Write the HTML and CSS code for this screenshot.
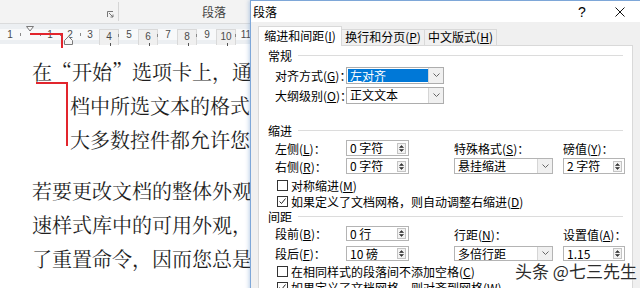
FILE: index.html
```html
<!DOCTYPE html>
<html lang="zh-CN">
<head>
  <meta charset="UTF-8" />
  <title>段落</title>
  <link rel="stylesheet" href="styles.css">
</head>
<body>
  <div class="screen">
    <!-- Word document behind the dialog -->
    <div class="word">
      <div class="ribbon">
        <div class="rgroup first">
          <svg class="launcher" width="7" height="7" viewBox="0 0 7 7">
            <path d="M0.5 6V0.5H6" fill="none" stroke="#777" />
            <path d="M2 2L6 6M3.5 6H6V3.5" fill="none" stroke="#777" />
          </svg>
        </div>
        <div class="rgroup second"><span class="rlabel">段落</span></div>
      </div>

      <div class="ruler-bar">
        <div class="ruler">
          <span class="rc">1</span>
          <span class="rc"></span>
          <span class="rc">1</span>
          <span class="rc">2</span>
          <span class="rc">3</span>
          <span class="rc tab">4</span>
          <span class="rc">5</span>
          <span class="rc tab">6</span>
          <span class="rc">7</span>
          <span class="rc tab">8</span>
          <span class="rc">9</span>
          <span class="rc tab">10</span>
          <span class="rc">11</span>
        </div>
      </div>

      <div class="page">
        <div class="para">
          <div class="ln">在“开始”选项卡上，通过从快速样式库中为所选文本选择一种外观，您可以方便地更改文</div>
          <div class="ln hang">档中所选文本的格式。您还可以使用“开始”选项卡上的其他控件来直接设置文本格式。</div>
          <div class="ln hang">大多数控件都允许您选择是使用当前主题外观，还是使用某种直接指定的格式。</div>
        </div>
        <div class="para">
          <div class="ln">若要更改文档的整体外观，请在“页面布局”选项卡上选择新的主题元素。若要更改快</div>
          <div class="ln">速样式库中的可用外观，请使用更改当前快速样式集命令。主题库和快速样式库都提供</div>
          <div class="ln">了重置命令，因而您总是可以将文档外观还原为原始模板中包含的外观。</div>
        </div>
      </div>

      <!-- indent markers and red annotation -->
      <svg class="marks" width="250" height="160" viewBox="0 0 250 160">
        <polygon points="26.5,26.5 33.5,26.5 30,31" fill="#f6f6f6" stroke="#7a7a7a" />
        <polygon points="64.5,40.5 68.5,36.5 72.5,40.5 72.5,44.5 64.5,44.5" fill="#f6f6f6" stroke="#7a7a7a" />
        <polyline points="30,34 62,34 62,48" fill="none" stroke="#e2252d" stroke-width="2" />
        <polyline points="36,83 67,83 67,146" fill="none" stroke="#e2252d" stroke-width="2" />
      </svg>
    </div>

    <!-- Paragraph dialog -->
    <div class="dialog">
      <div class="titlebar">
        <span class="title">段落</span>
        <span class="help">?</span>
        <span class="close">
          <svg width="10" height="10" viewBox="0 0 10 10"><path d="M0.5 0.5L9.5 9.5M9.5 0.5L0.5 9.5" stroke="#111" /></svg>
        </span>
      </div>

      <div class="tabs">
        <div class="tab on">缩进和间距(<u>I</u>)</div>
        <div class="tab t2">换行和分页(<u>P</u>)</div>
        <div class="tab t3">中文版式(<u>H</u>)</div>
      </div>

      <div class="panel">
        <div class="grp">常规</div>
        <div class="row top">
          <span class="lbl">对齐方式(<u>G</u>)：</span>
          <div class="combo wide">
            <span class="val hl">左对齐</span>
            <span class="btn"><svg width="7" height="4" viewBox="0 0 7 4"><path d="M0.5 0.5L3.5 3.5L6.5 0.5" fill="none" stroke="#666" /></svg></span>
          </div>
        </div>
        <div class="row">
          <span class="lbl">大纲级别(<u>O</u>)：</span>
          <div class="combo wide">
            <span class="val">正文文本</span>
            <span class="btn"><svg width="7" height="4" viewBox="0 0 7 4"><path d="M0.5 0.5L3.5 3.5L6.5 0.5" fill="none" stroke="#666" /></svg></span>
          </div>
        </div>

        <div class="grp gap">缩进</div>
        <div class="grid ind">
          <span class="lbl">左侧(<u>L</u>)：</span>
          <div class="spin"><span class="val">0 字符</span><span class="arr"><svg width="9" height="11" viewBox="0 0 9 11"><rect x="0.5" y="0.5" width="8" height="10" fill="#f2f2f2" stroke="#c4c4c4" /><path d="M2.5 4.5L4.5 2.5L6.5 4.5Z M2.5 6.5L4.5 8.5L6.5 6.5Z" fill="#333" stroke="#333" stroke-width="0.6" /></svg></span></div>
          <span class="lbl c3">特殊格式(<u>S</u>)：</span>
          <span class="lbl c4">磅值(<u>Y</u>)：</span>

          <span class="lbl">右侧(<u>R</u>)：</span>
          <div class="spin"><span class="val">0 字符</span><span class="arr"><svg width="9" height="11" viewBox="0 0 9 11"><rect x="0.5" y="0.5" width="8" height="10" fill="#f2f2f2" stroke="#c4c4c4" /><path d="M2.5 4.5L4.5 2.5L6.5 4.5Z M2.5 6.5L4.5 8.5L6.5 6.5Z" fill="#333" stroke="#333" stroke-width="0.6" /></svg></span></div>
          <div class="combo mid c3">
            <span class="val">悬挂缩进</span>
            <span class="btn"><svg width="7" height="4" viewBox="0 0 7 4"><path d="M0.5 0.5L3.5 3.5L6.5 0.5" fill="none" stroke="#666" /></svg></span>
          </div>
          <div class="spin narrow c4"><span class="val">2 字符</span><span class="arr"><svg width="9" height="11" viewBox="0 0 9 11"><rect x="0.5" y="0.5" width="8" height="10" fill="#f2f2f2" stroke="#c4c4c4" /><path d="M2.5 4.5L4.5 2.5L6.5 4.5Z M2.5 6.5L4.5 8.5L6.5 6.5Z" fill="#333" stroke="#333" stroke-width="0.6" /></svg></span></div>
        </div>

        <div class="chk first"><span class="box"></span>对称缩进(<u>M</u>)</div>
        <div class="chk"><span class="box"><svg width="9" height="9" viewBox="0 0 9 9"><path d="M1.5 4.5L3.5 6.5L7.5 1.5" fill="none" stroke="#222" stroke-width="1" /></svg></span>如果定义了文档网格，则自动调整右缩进(<u>D</u>)</div>

        <div class="grp short">间距</div>
        <div class="grid sp">
          <span class="lbl">段前(<u>B</u>)：</span>
          <div class="spin"><span class="val">0 行</span><span class="arr"><svg width="9" height="11" viewBox="0 0 9 11"><rect x="0.5" y="0.5" width="8" height="10" fill="#f2f2f2" stroke="#c4c4c4" /><path d="M2.5 4.5L4.5 2.5L6.5 4.5Z M2.5 6.5L4.5 8.5L6.5 6.5Z" fill="#333" stroke="#333" stroke-width="0.6" /></svg></span></div>
          <span class="lbl c3 low">行距(<u>N</u>)：</span>
          <span class="lbl c4 low">设置值(<u>A</u>)：</span>

          <span class="lbl">段后(<u>F</u>)：</span>
          <div class="spin"><span class="val">10 磅</span><span class="arr"><svg width="9" height="11" viewBox="0 0 9 11"><rect x="0.5" y="0.5" width="8" height="10" fill="#f2f2f2" stroke="#c4c4c4" /><path d="M2.5 4.5L4.5 2.5L6.5 4.5Z M2.5 6.5L4.5 8.5L6.5 6.5Z" fill="#333" stroke="#333" stroke-width="0.6" /></svg></span></div>
          <div class="combo mid c3">
            <span class="val">多倍行距</span>
            <span class="btn"><svg width="7" height="4" viewBox="0 0 7 4"><path d="M0.5 0.5L3.5 3.5L6.5 0.5" fill="none" stroke="#666" /></svg></span>
          </div>
          <div class="spin narrow c4"><span class="val">1.15</span><span class="arr"><svg width="9" height="11" viewBox="0 0 9 11"><rect x="0.5" y="0.5" width="8" height="10" fill="#f2f2f2" stroke="#c4c4c4" /><path d="M2.5 4.5L4.5 2.5L6.5 4.5Z M2.5 6.5L4.5 8.5L6.5 6.5Z" fill="#333" stroke="#333" stroke-width="0.6" /></svg></span></div>
        </div>

        <div class="chk"><span class="box"></span>在相同样式的段落间不添加空格(<u>C</u>)</div>
        <div class="chk"><span class="box"><svg width="9" height="9" viewBox="0 0 9 9"><path d="M1.5 4.5L3.5 6.5L7.5 1.5" fill="none" stroke="#222" stroke-width="1" /></svg></span>如果定义了文档网格，则对齐到网格(<u>W</u>)</div>
      </div>
    </div>

    <div class="watermark">头条 @七三先生</div>
  </div>
</body>
</html>
```

FILE: styles.css
```css
* {
  box-sizing: border-box;
}

body {
  margin: 0;
  background: #fff;
  font-family: "Noto Sans CJK SC", sans-serif;
  overflow: hidden;
}

.screen {
  position: relative;
  width: 640px;
  height: 288px;
  overflow: hidden;
}

/* ---------- word window ---------- */

.word {
  position: relative;
  width: 640px;
  height: 288px;
}

.ribbon {
  display: flex;
  height: 24px;
  background: #f3f3f3;
  border-bottom: 1px solid #dadbdc;
}

.rgroup {
  margin: 2px 0;
  display: flex;
}

.rgroup.first {
  width: 119px;
  border-right: 1px solid #d5d5d5;
  justify-content: flex-end;
  align-items: flex-end;
  padding: 0 4px 3px 0;
}

.rgroup.second {
  padding-left: 83px;
  align-items: center;
}

.rlabel {
  font-size: 12px;
  color: #444;
  line-height: 16px;
}

.ruler-bar {
  height: 20px;
  padding-top: 5px;
  background: #eceff2;
}

.ruler {
  display: flex;
  height: 11px;
  background: #f8f9fa;
}

.rc {
  position: relative;
  flex: none;
  width: 20px;
  text-align: center;
  font: 10px/11px "Liberation Sans", sans-serif;
  color: #4a4a4a;
}

.rc::after {
  content: "";
  position: absolute;
  right: -1px;
  top: 4px;
  width: 1px;
  height: 3px;
  background: #8a8a8a;
}

.rc.tab::before {
  content: "";
  position: absolute;
  left: 10px;
  top: 13px;
  width: 1px;
  height: 3px;
  background: #555;
}

.page {
  padding: 11px 0 0 32px;
  font-family: "Noto Serif CJK SC", "Noto Sans CJK SC", serif;
  font-size: 20px;
  line-height: 34px;
  color: #1e1e1e;
  white-space: nowrap;
}

.para + .para {
  margin-top: 17px;
}

.ln.hang {
  padding-left: 38px;
}

.marks {
  position: absolute;
  left: 0;
  top: 0;
}

/* ---------- dialog ---------- */

.dialog {
  position: absolute;
  left: 250px;
  top: 0;
  width: 400px;
  height: 300px;
  background: #f0f0f0;
  border: 1px solid #7ea7d8;
  box-shadow: -1px 0 4px rgba(70, 120, 190, 0.35);
  font-size: 12px;
  color: #000;
}

.titlebar {
  display: flex;
  align-items: center;
  height: 21px;
  background: #fff;
  padding-right: 6px;
}

.title {
  flex: 1;
  padding-left: 2px;
}

.help {
  width: 30px;
  text-align: center;
  font-family: "Liberation Sans", sans-serif;
  font-size: 14px;
}

.close {
  width: 46px;
  display: flex;
  justify-content: center;
}

.tabs {
  display: flex;
  align-items: flex-end;
  height: 23px;
  padding-left: 7px;
}

.tab {
  height: 16px;
  line-height: 14px;
  border: 1px solid #d9d9d9;
  border-bottom: none;
  background: #f0f0f0;
  text-align: center;
  margin-left: -1px;
}

.tab.on {
  position: relative;
  z-index: 1;
  width: 84px;
  height: 20px;
  line-height: 18px;
  margin: 0 0 -1px 0;
  background: #fff;
}

.tab.t2 {
  width: 84px;
}

.tab.t3 {
  width: 73px;
}

.panel {
  margin-left: 7px;
  width: 375px;
  height: 260px;
  background: #fff;
  border: 1px solid #d9d9d9;
  padding: 1px 9px 0 9px;
}

.grp {
  display: flex;
  align-items: center;
  height: 16px;
}

.grp::after {
  content: "";
  flex: 1;
  border-top: 1px solid #dcdcdc;
  margin-left: 6px;
}

.grp.gap {
  margin-top: 17px;
}

.grp.short {
  height: 14px;
}

.row {
  display: flex;
  align-items: center;
  height: 20px;
  padding-left: 7px;
}

.row.top {
  margin-top: 2px;
}

.lbl {
  white-space: nowrap;
}

.row .lbl {
  width: 71px;
}

u {
  text-decoration-thickness: 1px;
  text-underline-offset: 1px;
}

.combo,
.spin {
  display: flex;
  background: #fff;
  border: 1px solid #b4b4b4;
}

.combo.wide {
  width: 98px;
  height: 17px;
  border-color: #adadad;
}

.combo.mid {
  width: 99px;
  height: 16px;
}

.combo .val,
.spin .val {
  flex: 1;
  padding-left: 3px;
  line-height: 14px;
  white-space: nowrap;
}

.combo .val.hl {
  margin: 1px 0 1px 1px;
  padding-left: 2px;
  background: #0078d7;
  color: #fff;
  line-height: 13px;
}

.combo .btn {
  width: 15px;
  display: flex;
  align-items: center;
  justify-content: center;
  background: #f0f0f0;
  border-left: 1px solid #d5d5d5;
}

.spin {
  width: 63px;
  height: 16px;
}

.spin.narrow {
  width: 62px;
}

.spin .arr {
  width: 13px;
  display: flex;
  align-items: center;
  justify-content: center;
}

.grid {
  display: grid;
  grid-template-columns: 71px 108px 109px 62px;
  align-items: center;
  padding-left: 7px;
}

.grid.ind {
  grid-template-rows: 18px 18px;
  margin-top: 1px;
}

.grid.sp {
  grid-template-rows: 20px 20px;
}

.grid.sp .spin,
.grid.sp .combo {
  height: 15px;
}

.grid.sp .val {
  line-height: 13px;
}

.c3 {
  grid-column: 3;
}

.c4 {
  grid-column: 4;
}

.low {
  padding-top: 3px;
}

.chk {
  display: flex;
  align-items: center;
  height: 16px;
  padding-left: 9px;
  white-space: nowrap;
}

.chk.first {
  margin-top: 2px;
}

.box {
  flex: none;
  width: 11px;
  height: 11px;
  margin-right: 3px;
  border: 1px solid #333;
  background: #fff;
  display: flex;
  align-items: center;
  justify-content: center;
}

.watermark {
  position: absolute;
  left: 515px;
  top: 261px;
  font-size: 17px;
  line-height: 20px;
  color: #2c2c2c;
  white-space: nowrap;
  text-shadow: 0 0 2px #fff, 0 0 2px #fff;
}
```
